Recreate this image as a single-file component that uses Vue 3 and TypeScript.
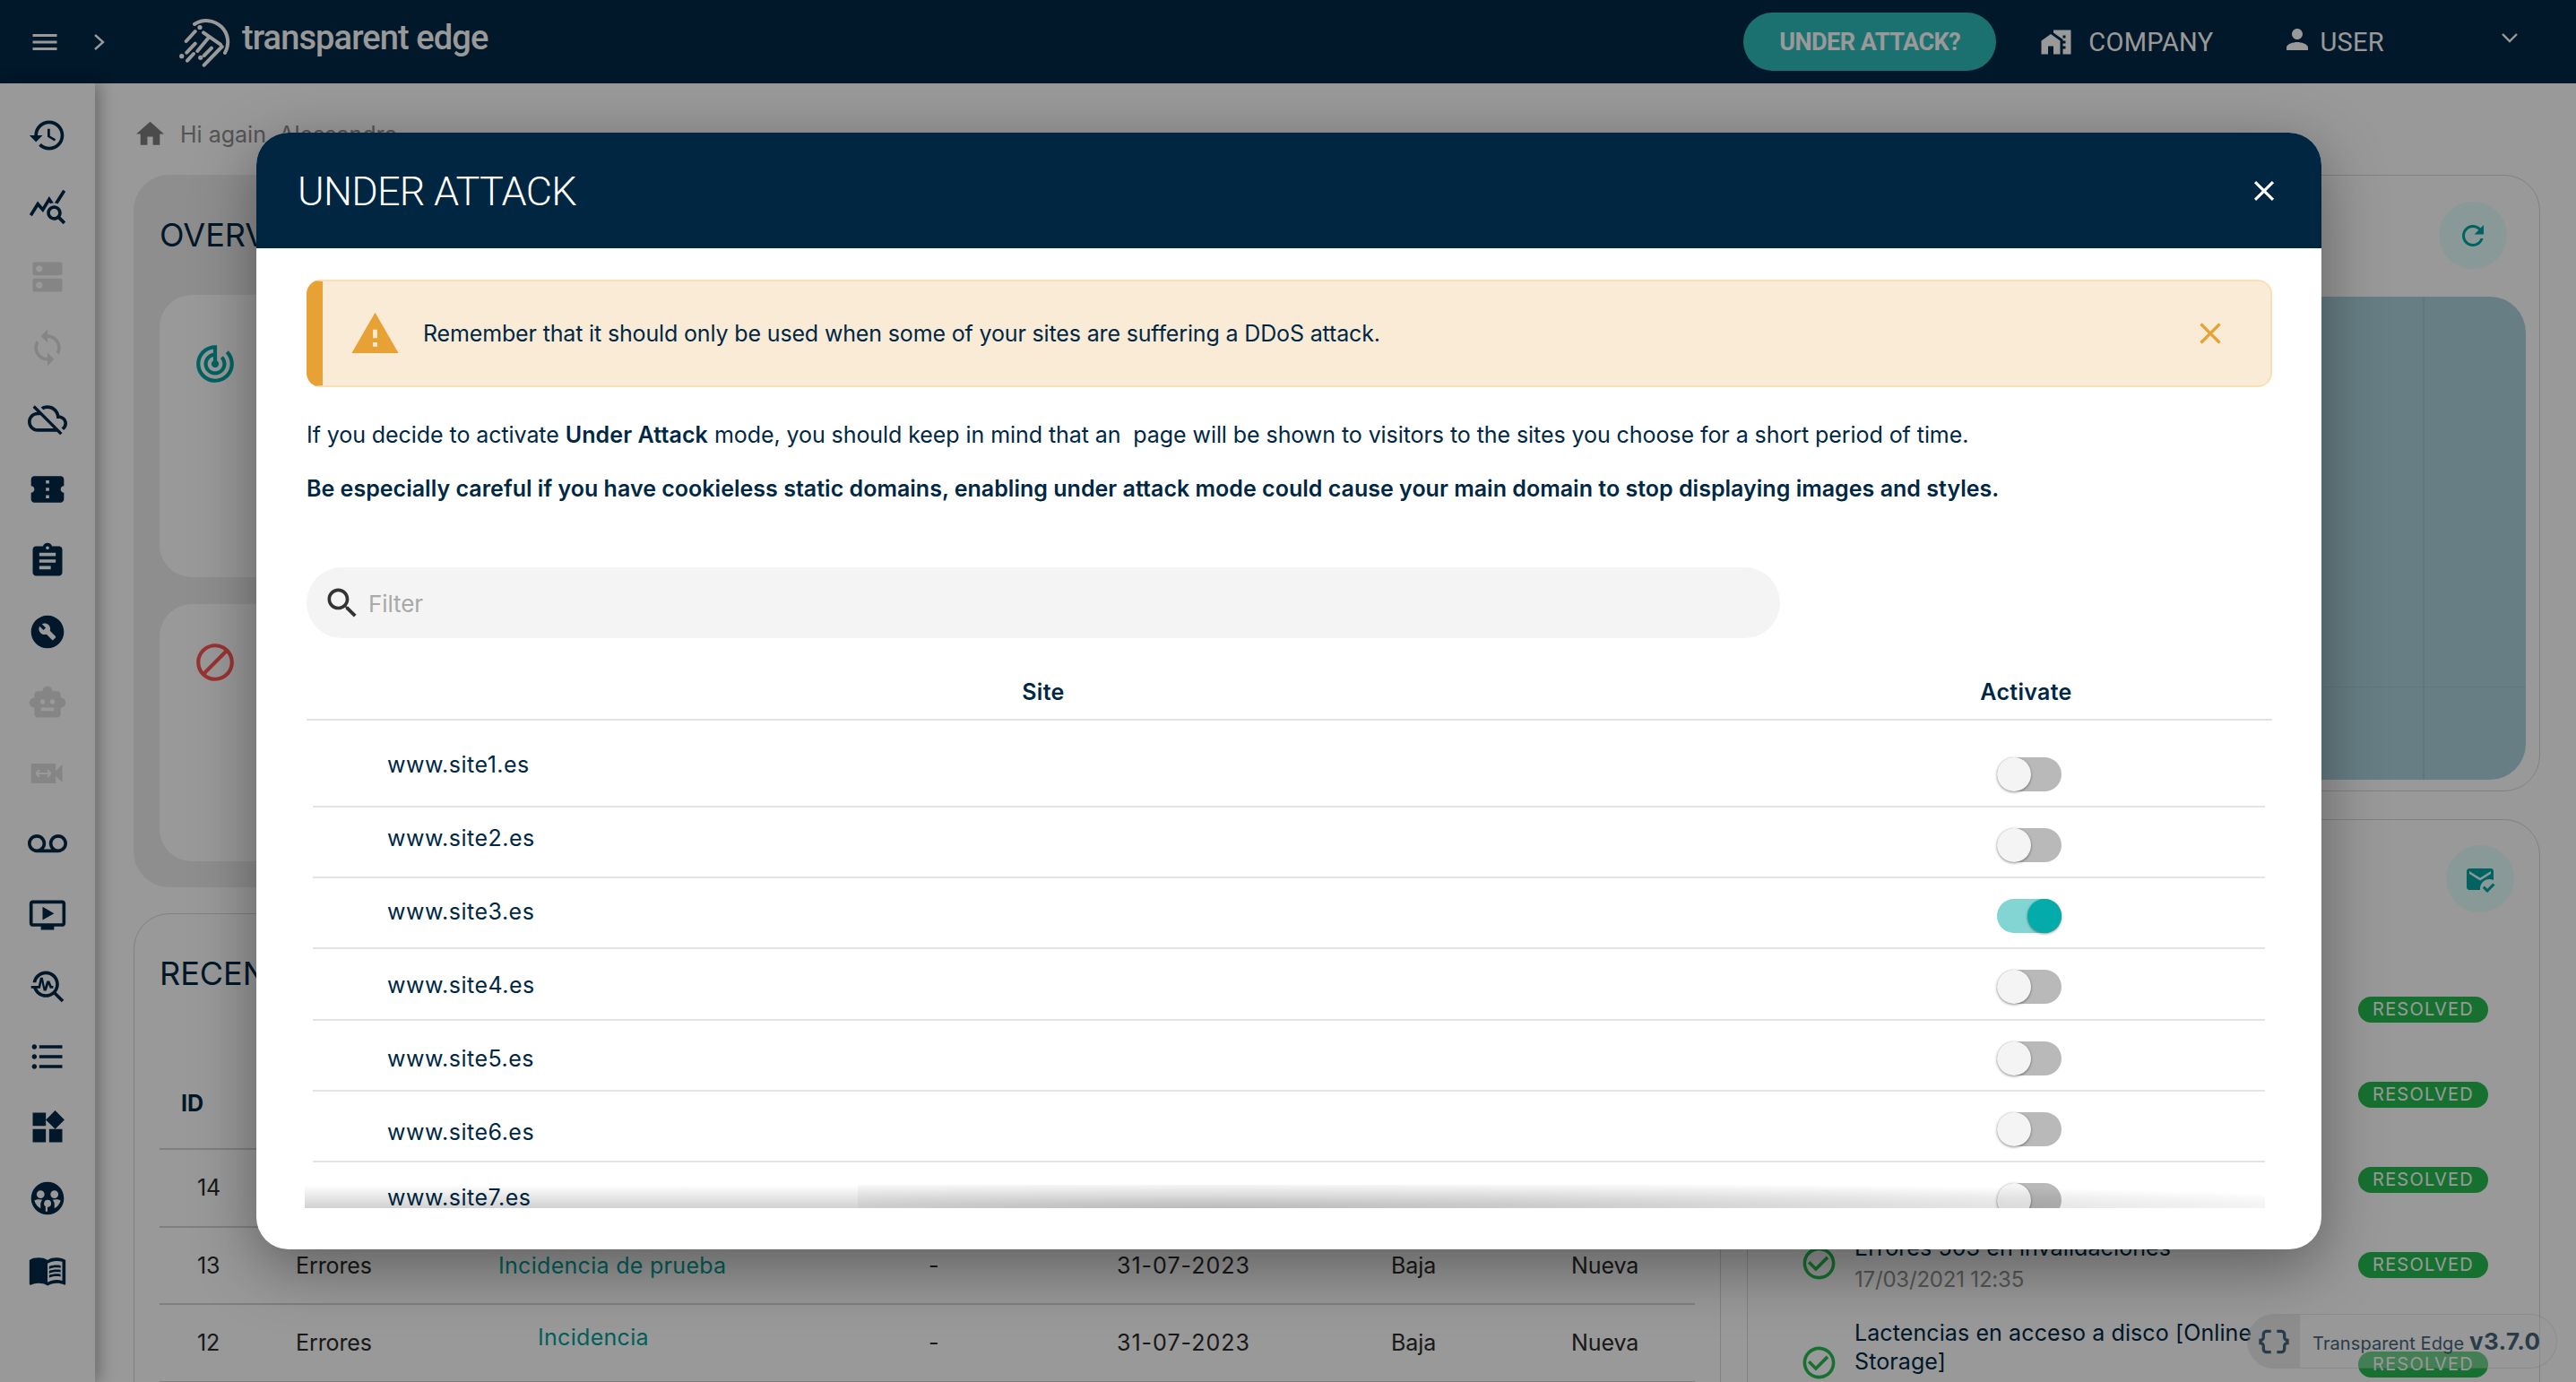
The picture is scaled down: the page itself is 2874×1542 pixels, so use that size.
<template>
  <div class="app">
    <!-- Barra superior -->
    <header class="topbar">
      <svg class="ico burger" viewBox="0 0 24 24"><path :d="icons.menu" /></svg>
      <svg class="chev-right" viewBox="0 0 14 20"><path d="M2 2l9 8-9 8" /></svg>
      <div class="logo">
        <svg class="logo-mark" viewBox="0 0 75 80">
          <path d="M26 20A24 24 0 0 1 60 52M26.7 28L16.7 39M26.7 41.7L17.3 51.7M25 53L18 60.7M56.7 45L36.7 65.7M45 46.7L36.7 55M36 29.3L55 42.7M41.7 35L29.3 50" />
          <circle cx="32" cy="23.5" r="2.6" />
          <circle cx="11.7" cy="55.7" r="2.6" />
          <circle cx="32.7" cy="57.3" r="2.6" />
        </svg>
        <span class="logo-text">transparent edge</span>
      </div>
      <button class="attack-btn">UNDER ATTACK?</button>
      <svg class="ico nav-ico company-ico" viewBox="0 0 24 24"><path :d="icons.homeWork" /></svg>
      <span class="nav-label company">COMPANY</span>
      <svg class="ico nav-ico user-ico" viewBox="0 0 24 24"><path :d="icons.person" /></svg>
      <span class="nav-label user">USER</span>
      <svg class="chev-down" viewBox="0 0 20 12"><path d="M2 2l8 8 8-8" /></svg>
    </header>

    <div class="shell">
      <!-- Menu lateral -->
      <aside class="sidebar">
        <svg
          v-for="item in sideIcons"
          :key="item.name"
          :class="['side-ico', { off: item.off }]"
          viewBox="0 0 24 24"
        >
          <path :d="item.d" fill-rule="evenodd" />
          <path v-if="item.name === 'video'" class="video-arrows" d="M5 12h9M5 12l2-2M5 12l2 2M14 12l-2-2M14 12l-2 2" />
        </svg>
      </aside>

      <main class="main">
        <div class="crumb">
          <svg class="ico home" viewBox="0 0 24 24"><path :d="icons.home" /></svg>
          <span>Hi again, Alessandra</span>
        </div>

        <div class="columns">
          <div class="col">
            <section class="overview">
              <h2 class="section-title">OVERVIEW</h2>
              <div class="stat stat-a">
                <svg class="stat-ico teal" viewBox="0 0 24 24"><path :d="icons.track" /></svg>
              </div>
              <div class="stat stat-b">
                <svg class="stat-ico red" viewBox="0 0 24 24"><path :d="icons.block" /></svg>
              </div>
            </section>

            <section class="recent">
              <h2 class="section-title">RECENT</h2>
              <div class="inc-row inc-head">
                <span class="inc-id">ID</span>
              </div>
              <div v-for="row in incidents" :key="row.id" class="inc-row">
                <span class="inc-id">{{ row.id }}</span>
                <span>{{ row.type }}</span>
                <span :class="['inc-title', { boxed: row.boxed }]">{{ row.title }}</span>
                <span>-</span>
                <span class="inc-date">{{ row.date }}</span>
                <span>{{ row.priority }}</span>
                <span>{{ row.status }}</span>
              </div>
            </section>
          </div>

          <div class="col">
            <section class="side-card chart-card">
              <button class="round-btn refresh-btn">
                <svg viewBox="0 0 24 24"><path :d="icons.refresh" /></svg>
              </button>
              <div class="chart">
                <div></div><div></div><div></div><div></div>
              </div>
            </section>

            <section class="side-card status-card">
              <button class="round-btn mail-btn">
                <svg viewBox="0 0 24 24"><path :d="icons.mailRead" /></svg>
              </button>
              <div v-for="item in statusItems" :key="item.title" class="status-row">
                <svg class="check" viewBox="0 0 24 24"><path :d="icons.check" /></svg>
                <div>
                  <div class="status-title">{{ item.title }}</div>
                  <div class="status-date">{{ item.date }}</div>
                </div>
                <span class="badge">RESOLVED</span>
              </div>
            </section>
          </div>
        </div>
      </main>
    </div>

    <!-- Modal Under Attack -->
    <div class="backdrop">
      <div class="modal">
        <div class="modal-head">
          <h1>UNDER ATTACK</h1>
          <svg class="modal-close" viewBox="0 0 24 24"><path :d="icons.close" /></svg>
        </div>

        <div class="modal-body">
          <div class="alert">
            <svg class="alert-ico" viewBox="0 0 24 24"><path :d="icons.warning" /></svg>
            <span class="alert-text">Remember that it should only be used when some of your sites are suffering a DDoS attack.</span>
            <svg class="alert-close" viewBox="0 0 24 24"><path :d="icons.close" /></svg>
          </div>

          <p class="intro">If you decide to activate <b>Under Attack</b> mode, you should keep in mind that an &nbsp;page will be shown to visitors to the sites you choose for a short period of time.</p>
          <p class="intro strong">Be especially careful if you have cookieless static domains, enabling under attack mode could cause your main domain to stop displaying images and styles.</p>

          <label class="filter">
            <svg viewBox="0 0 24 24"><path :d="icons.search" /></svg>
            <input type="text" placeholder="Filter" />
          </label>

          <div class="site-head">
            <span>Site</span>
            <span>Activate</span>
          </div>

          <div class="site-list">
            <div v-for="site in sites" :key="site.name" class="site-row">
              <span class="site-name" :style="{ paddingTop: site.top + 'px' }">{{ site.name }}</span>
              <span :class="['toggle', { on: site.on }]"><i></i></span>
            </div>
            <div class="list-fade">
              <div class="fade-a"></div>
              <div class="fade-b"></div>
            </div>
          </div>
        </div>
      </div>
    </div>

    <div class="version">
      <span class="version-ico">
        <svg viewBox="0 0 24 24"><path :d="icons.dataObject" /></svg>
      </span>
      <span class="version-text">Transparent Edge <b>v3.7.0</b></span>
    </div>
  </div>
</template>

<script setup lang="ts">
// Pantalla de panel con el modal "Under Attack" abierto.

const icons = {
  menu: 'M3 18h18v-2H3v2zm0-5h18v-2H3v2zm0-7v2h18V6H3z',
  homeWork: 'M1 11v10h5v-6h4v6h5V11L8 6z M10 3v1.97l7 5V11h2v2h-2v2h2v2h-2v4h6V3H10zm9 6h-2V7h2v2z',
  person: 'M12 12c2.21 0 4-1.79 4-4s-1.79-4-4-4-4 1.79-4 4 1.79 4 4 4zm0 2c-2.67 0-8 1.34-8 4v2h16v-2c0-2.66-5.33-4-8-4z',
  home: 'M10 20v-6h4v6h5v-8h3L12 3 2 12h3v8z',
  track: 'M19.07 4.93l-1.41 1.41C19.1 7.79 20 9.79 20 12c0 4.42-3.58 8-8 8s-8-3.58-8-8c0-4.08 3.05-7.44 7-7.93v2.02C8.16 6.57 6 9.03 6 12c0 3.31 2.69 6 6 6s6-2.69 6-6c0-1.66-.67-3.16-1.76-4.24l-1.41 1.41C15.55 9.9 16 10.9 16 12c0 2.21-1.79 4-4 4s-4-1.79-4-4c0-1.86 1.28-3.41 3-3.86v2.14c-.6.35-1 .98-1 1.72 0 1.1.9 2 2 2s2-.9 2-2c0-.74-.4-1.38-1-1.72V2h-1C6.48 2 2 6.48 2 12s4.48 10 10 10 10-4.48 10-10c0-2.76-1.12-5.26-2.93-7.07z',
  block: 'M12 2C6.48 2 2 6.48 2 12s4.48 10 10 10 10-4.48 10-10S17.52 2 12 2zM4 12c0-4.42 3.58-8 8-8 1.85 0 3.55.63 4.9 1.69L5.69 16.9C4.63 15.55 4 13.85 4 12zm8 8c-1.85 0-3.55-.63-4.9-1.69L18.31 7.1C19.37 8.45 20 10.15 20 12c0 4.42-3.58 8-8 8z',
  refresh: 'M17.65 6.35C16.2 4.9 14.21 4 12 4c-4.42 0-7.99 3.58-7.99 8s3.57 8 7.99 8c3.73 0 6.84-2.55 7.73-6h-2.08c-.82 2.33-3.04 4-5.65 4-3.31 0-6-2.69-6-6s2.69-6 6-6c1.66 0 3.14.69 4.22 1.78L13 11h7V4l-2.35 2.35z',
  mailRead: 'M12 19c0-3.87 3.13-7 7-7 1.08 0 2.09.25 3 .68V6c0-1.1-.9-2-2-2H4c-1.1 0-2 .9-2 2v12c0 1.1.9 2 2 2h8.08c-.05-.33-.08-.66-.08-1zM4 6l8 5 8-5v2l-8 5-8-5V6zm13.34 16-3.54-3.54 1.41-1.41 2.12 2.12 4.24-4.24L23 16.34 17.34 22z',
  check: 'M16.59 7.58 10 14.17l-3.59-3.58L5 12l5 5 8-8zM12 2C6.48 2 2 6.48 2 12s4.48 10 10 10 10-4.48 10-10S17.52 2 12 2zm0 18c-4.42 0-8-3.58-8-8s3.58-8 8-8 8 3.58 8 8-3.58 8-8 8z',
  close: 'M19 6.41L17.59 5 12 10.59 6.41 5 5 6.41 10.59 12 5 17.59 6.41 19 12 13.41 17.59 19 19 17.59 13.41 12z',
  warning: 'M1 21h22L12 2 1 21zm12-3h-2v-2h2v2zm0-4h-2v-4h2v4z',
  search: 'M15.5 14h-.79l-.28-.27C15.41 12.59 16 11.11 16 9.5 16 5.91 13.09 3 9.5 3S3 5.91 3 9.5 5.91 16 9.5 16c1.61 0 3.09-.59 4.23-1.57l.27.28v.79l5 4.99L20.49 19l-4.99-5zm-6 0C7.01 14 5 11.99 5 9.5S7.01 5 9.5 5 14 7.01 14 9.5 11.99 14 9.5 14z',
  dataObject: 'M4 7v2c0 .55-.45 1-1 1H2v4h1c.55 0 1 .45 1 1v2c0 1.65 1.35 3 3 3h3v-2H7c-.55 0-1-.45-1-1v-2c0-1.3-.84-2.42-2-2.83v-.34C5.16 11.42 6 10.3 6 9V7c0-.55.45-1 1-1h3V4H7C5.35 4 4 5.35 4 7zm17 3c-.55 0-1-.45-1-1V7c0-1.65-1.35-3-3-3h-3v2h3c.55 0 1 .45 1 1v2c0 1.3.84 2.42 2 2.83v.34c-1.16.41-2 1.52-2 2.83v2c0 .55-.45 1-1 1h-3v2h3c1.65 0 3-1.35 3-3v-2c0-.55.45-1 1-1h1v-4h-1z',
}

const sideIcons = [
  { name: 'history', d: 'M13 3c-4.97 0-9 4.03-9 9H1l3.89 3.89.07.14L9 12H6c0-3.87 3.13-7 7-7s7 3.13 7 7-3.13 7-7 7c-1.93 0-3.68-.79-4.94-2.06l-1.42 1.42C8.27 19.99 10.51 21 13 21c4.97 0 9-4.03 9-9s-4.03-9-9-9zm-1 5v5l4.28 2.54.72-1.21-3.5-2.08V8H12z' },
  { name: 'query', d: 'M19.88 18.47c.44-.7.7-1.51.7-2.39 0-2.49-2.01-4.5-4.5-4.5s-4.5 2.01-4.5 4.5 2.01 4.5 4.49 4.5c.88 0 1.7-.26 2.39-.7L21.58 23 23 21.58l-3.12-3.11zm-3.8.11c-1.38 0-2.5-1.12-2.5-2.5s1.12-2.5 2.5-2.5 2.5 1.12 2.5 2.5-1.12 2.5-2.5 2.5zm-.36-8.5c-.74.02-1.45.18-2.1.45l-.55-.83-3.8 6.18-3.01-3.52-3.63 5.81L1 17l5-8 3 3.5L13 6l2.72 4.08zm2.59.5c-.64-.28-1.33-.45-2.05-.49L21.38 2 23 3.18l-4.69 7.4z' },
  { name: 'dns', off: true, d: 'M20 13H4c-.55 0-1 .45-1 1v6c0 .55.45 1 1 1h16c.55 0 1-.45 1-1v-6c0-.55-.45-1-1-1zM7 19c-1.1 0-2-.9-2-2s.9-2 2-2 2 .9 2 2-.9 2-2 2zM20 3H4c-.55 0-1 .45-1 1v6c0 .55.45 1 1 1h16c.55 0 1-.45 1-1V4c0-.55-.45-1-1-1zM7 9c-1.1 0-2-.9-2-2s.9-2 2-2 2 .9 2 2-.9 2-2 2z' },
  { name: 'sync', off: true, d: 'M12 4V1L8 5l4 4V6c3.31 0 6 2.69 6 6 0 1.01-.25 1.97-.7 2.8l1.46 1.46C19.54 15.03 20 13.57 20 12c0-4.42-3.58-8-8-8zm0 14c-3.31 0-6-2.69-6-6 0-1.01.25-1.97.7-2.8L5.24 7.74C4.46 8.97 4 10.43 4 12c0 4.42 3.58 8 8 8v3l4-4-4-4v3z' },
  { name: 'cloud', d: 'M19.35 10.04C18.67 6.59 15.64 4 12 4c-1.48 0-2.85.43-4.01 1.17l1.46 1.46C10.21 6.23 11.08 6 12 6c3.04 0 5.5 2.46 5.5 5.5v.5H19c1.66 0 3 1.34 3 3 0 1.13-.64 2.11-1.56 2.62l1.45 1.45C23.16 18.16 24 16.68 24 15c0-2.64-2.05-4.78-4.65-4.96zM3 5.27l2.75 2.74C2.56 8.15 0 10.77 0 14c0 3.31 2.69 6 6 6h11.73l2 2L21 20.73 4.27 4 3 5.27zM7.73 10l8 8H6c-2.21 0-4-1.79-4-4s1.79-4 4-4h1.73z' },
  { name: 'ticket', d: 'M22 10V6c0-1.11-.9-2-2-2H4c-1.1 0-1.99.89-1.99 2v4c1.1 0 1.99.9 1.99 2s-.89 2-2 2v4c0 1.1.9 2 2 2h16c1.1 0 2-.9 2-2v-4c-1.1 0-2-.9-2-2s.9-2 2-2zm-9 7.5h-2v-2h2v2zm0-4.5h-2v-2h2v2zm0-4.5h-2v-2h2v2z' },
  { name: 'assignment', d: 'M19 3h-4.18C14.4 1.84 13.3 1 12 1c-1.3 0-2.4.84-2.82 2H5c-1.1 0-2 .9-2 2v14c0 1.1.9 2 2 2h14c1.1 0 2-.9 2-2V5c0-1.1-.9-2-2-2zm-7 0c.55 0 1 .45 1 1s-.45 1-1 1-1-.45-1-1 .45-1 1-1zm2 14H7v-2h7v2zm3-4H7v-2h10v2zm0-4H7V7h10v2z' },
  { name: 'build', d: 'M12 2C6.48 2 2 6.48 2 12c0 5.52 4.48 10 10 10s10-4.48 10-10C22 6.48 17.52 2 12 2zm4.9 13.49-1.4 1.4c-.2.2-.51.2-.71 0l-3.41-3.41c-1.22.43-2.64.17-3.62-.81-1.11-1.11-1.3-2.79-.59-4.1l2.35 2.35 1.41-1.41-2.35-2.34c1.32-.71 2.99-.52 4.1.59.98.98 1.24 2.4.81 3.62l3.41 3.41c.19.19.19.51 0 .7z' },
  { name: 'robot', off: true, d: 'M20 9V7c0-1.1-.9-2-2-2h-3c0-1.66-1.34-3-3-3S9 3.34 9 5H6c-1.1 0-2 .9-2 2v2c-1.66 0-3 1.34-3 3s1.34 3 3 3v4c0 1.1.9 2 2 2h12c1.1 0 2-.9 2-2v-4c1.66 0 3-1.34 3-3s-1.34-3-3-3zM7.5 11.5C7.5 10.67 8.17 10 9 10s1.5.67 1.5 1.5S9.83 13 9 13s-1.5-.67-1.5-1.5zM16 17H8v-2h8v2zm-1-4c-.83 0-1.5-.67-1.5-1.5S14.17 10 15 10s1.5.67 1.5 1.5S15.83 13 15 13z' },
  { name: 'video', off: true, d: 'M17 10.5V7c0-.55-.45-1-1-1H3c-.55 0-1 .45-1 1v10c0 .55.45 1 1 1h13c.55 0 1-.45 1-1v-3.5l4 4v-11l-4 4z' },
  { name: 'voicemail', d: 'M18.5 6C15.46 6 13 8.46 13 11.5c0 1.33.47 2.55 1.26 3.5H9.74c.79-.95 1.26-2.17 1.26-3.5C11 8.46 8.54 6 5.5 6S0 8.46 0 11.5 2.46 17 5.5 17h13c3.04 0 5.5-2.46 5.5-5.5S21.54 6 18.5 6zm-13 9C3.57 15 2 13.43 2 11.5S3.57 8 5.5 8 9 9.57 9 11.5 7.43 15 5.5 15zm13 0c-1.93 0-3.5-1.57-3.5-3.5S16.57 8 18.5 8 22 9.57 22 11.5 20.43 15 18.5 15z' },
  { name: 'tv', d: 'M21 3H3c-1.11 0-2 .89-2 2v12c0 1.1.89 2 2 2h5v2h8v-2h5c1.1 0 1.99-.9 1.99-2L23 5c0-1.11-.9-2-2-2zm0 14H3V5h18v12zM16 11l-7 4V7z' },
  { name: 'trouble', d: 'M22 20.59l-4.69-4.69C18.37 14.55 19 12.85 19 11c0-4.42-3.58-8-8-8-4.08 0-7.44 3.05-7.93 7h2.02C5.57 7.17 8.03 5 11 5c3.31 0 6 2.69 6 6s-2.69 6-6 6c-2.42 0-4.5-1.44-5.45-3.5H3.4C4.45 16.69 7.46 19 11 19c1.85 0 3.55-.63 4.9-1.69L20.59 22 22 20.59zM8.43 9.69L9.65 15h1.64l1.26-3.78.95 2.28h2V12h-1l-1.25-3h-1.63l-1.25 3.78L9.18 7H7.57l-1.12 5H2v1.5h5.57z' },
  { name: 'list', d: 'M4 10.5c-.83 0-1.5.67-1.5 1.5s.67 1.5 1.5 1.5 1.5-.67 1.5-1.5-.67-1.5-1.5-1.5zm0-6c-.83 0-1.5.67-1.5 1.5S3.17 7.5 4 7.5 5.5 6.83 5.5 6 4.83 4.5 4 4.5zm0 12c-.83 0-1.5.68-1.5 1.5s.68 1.5 1.5 1.5 1.5-.68 1.5-1.5-.67-1.5-1.5-1.5zM7 19h14v-2H7v2zm0-6h14v-2H7v2zm0-8v2h14V5H7z' },
  { name: 'widgets', d: 'M13 13v8h8v-8h-8zM3 21h8v-8H3v8zM3 3v8h8V3H3zm13.66-1.31L11 7.34 16.66 13l5.66-5.66-5.66-5.65z' },
  { name: 'people', d: 'M12 2a10 10 0 1 0 0 20 10 10 0 0 0 0-20zM7.8 7.2a2.4 2.4 0 1 1 0 4.8 2.4 2.4 0 0 1 0-4.8zm8.4 0a2.4 2.4 0 1 1 0 4.8 2.4 2.4 0 0 1 0-4.8zM12 13a2.2 2.2 0 1 1 0 4.4V20h-1.2v-3a2.2 2.2 0 0 1 1.2-4zM4 13.4c1.3-.8 3.2-.9 5-.4-1 .9-1.4 2.2-1.2 3.6v1.6A8 8 0 0 1 4 13.4zm16 0a8 8 0 0 1-3.8 4.8v-1.6c.2-1.4-.2-2.7-1.2-3.6 1.8-.5 3.7-.4 5 .4z' },
  { name: 'book', d: 'M21 5c-1.11-.35-2.33-.5-3.5-.5-1.95 0-4.05.4-5.5 1.5-1.45-1.1-3.55-1.5-5.5-1.5S2.45 4.9 1 6v14.65c0 .25.25.5.5.5.1 0 .15-.05.25-.05C3.1 20.45 5.05 20 6.5 20c1.95 0 4.05.4 5.5 1.5 1.35-.85 3.8-1.5 5.5-1.5 1.65 0 3.35.3 4.75 1.05.1.05.15.05.25.05.25 0 .5-.25.5-.5V6c-.6-.45-1.25-.75-2-1zm0 13.5c-1.1-.35-2.3-.5-3.5-.5-1.7 0-4.15.65-5.5 1.5V8c1.35-.85 3.8-1.5 5.5-1.5 1.2 0 2.4.15 3.5.5v11.5zM17.5 10.5c.88 0 1.73.09 2.5.26V9.24c-.79-.15-1.64-.24-2.5-.24-1.7 0-3.24.29-4.5.83v1.66c1.13-.64 2.7-.99 4.5-.99zM13 12.49v1.66c1.13-.64 2.7-.99 4.5-.99.88 0 1.73.09 2.5.26V11.9c-.79-.15-1.64-.24-2.5-.24-1.7 0-3.24.3-4.5.83zM17.5 14.33c-1.7 0-3.24.29-4.5.83v1.66c1.13-.64 2.7-.99 4.5-.99.88 0 1.73.09 2.5.26v-1.52c-.79-.16-1.64-.24-2.5-.24z' },
]

// La fila 14 queda casi entera tapada por el modal
const incidents = [
  { id: 14, type: '', title: '', date: '', priority: '', status: '' },
  { id: 13, type: 'Errores', title: 'Incidencia de prueba', date: '31-07-2023', priority: 'Baja', status: 'Nueva' },
  { id: 12, type: 'Errores', title: 'Incidencia', date: '31-07-2023', priority: 'Baja', status: 'Nueva', boxed: true },
]

const statusItems = [
  { title: 'Errores 503 en caché', date: '22/03/2021 10:20' },
  { title: 'Latencias en origen', date: '19/03/2021 16:05' },
  { title: 'Errores en purgas', date: '18/03/2021 09:40' },
  { title: 'Errores 503 en invalidaciones', date: '17/03/2021 12:35' },
  { title: 'Lactencias en acceso a disco [Online Storage]', date: '16/03/2021 08:15' },
]

// top: ajuste vertical del nombre dentro de la fila
const sites = [
  { name: 'www.site1.es', on: false, top: 15 },
  { name: 'www.site2.es', on: false, top: 18 },
  { name: 'www.site3.es', on: true, top: 21 },
  { name: 'www.site4.es', on: false, top: 24 },
  { name: 'www.site5.es', on: false, top: 26 },
  { name: 'www.site6.es', on: false, top: 29 },
  { name: 'www.site7.es', on: false, top: 23 },
]
</script>

<style scoped>
.app {
  position: relative;
  width: 2874px;
  height: 1542px;
  overflow: hidden;
  background: #fff;
  font-family: Inter, "Liberation Sans", sans-serif;
  font-size: 25px;
  color: #002845;
  letter-spacing: -0.1px;
}

.ico {
  fill: currentColor;
  flex: none;
}

/* Barra superior */
.topbar {
  height: 93px;
  display: flex;
  align-items: center;
  padding-left: 32px;
  background: #002845;
  color: #fff;
  font-family: Roboto, "Liberation Sans", sans-serif;
  letter-spacing: 0;
}

.burger {
  width: 36px;
  height: 36px;
}

.chev-right {
  width: 14px;
  height: 20px;
  margin-left: 36px;
  fill: none;
  stroke: #fff;
  stroke-width: 2.4;
}

.logo {
  display: flex;
  align-items: center;
  margin-left: 73px;
  height: 80px;
}

.logo-mark {
  width: 75px;
  height: 80px;
  fill: #fff;
  stroke: #fff;
}

.logo-mark path {
  fill: none;
  stroke-width: 4;
  stroke-linecap: round;
}

.logo-mark circle {
  stroke: none;
}

.logo-text {
  margin-left: 4px;
  font-size: 38px;
  font-weight: 500;
  letter-spacing: -0.9px;
  line-height: 1;
  margin-top: -10px;
}

.attack-btn {
  margin-left: auto;
  width: 282px;
  height: 65px;
  border: 0;
  border-radius: 33px;
  background: #2dbcbb;
  color: #fff;
  font-family: inherit;
  font-size: 27px;
  font-weight: 700;
  letter-spacing: -0.5px;
  padding: 0;
}

.nav-ico {
  width: 36px;
  height: 36px;
}

.company-ico {
  margin-left: 49px;
}

.nav-label {
  font-size: 29px;
  letter-spacing: 0.3px;
}

.company {
  margin-left: 18px;
}

.user-ico {
  margin-left: 76px;
  margin-top: -6px;
}

.user {
  margin-left: 7px;
}

.chev-down {
  width: 20px;
  height: 12px;
  margin-left: 130px;
  margin-right: 64px;
  margin-top: -9px;
  fill: none;
  stroke: #fff;
  stroke-width: 2.4;
}

/* Estructura */
.shell {
  display: grid;
  grid-template-columns: 106px 1fr;
  height: 1449px;
}

.sidebar {
  display: flex;
  flex-direction: column;
  align-items: center;
  gap: 35.1px;
  padding-top: 36px;
  background: #fff;
  box-shadow: 6px 0 16px rgba(0, 0, 0, 0.28);
  position: relative;
}

.side-ico {
  width: 44px;
  height: 44px;
  flex: none;
  fill: #002845;
}

.side-ico.off {
  fill: #dedede;
}

.video-arrows {
  fill: none;
  stroke: #fff;
  stroke-width: 1.1;
}

.main {
  padding: 35px 40px 0 43px;
  overflow: hidden;
}

.crumb {
  display: flex;
  align-items: center;
  height: 37px;
  gap: 15px;
  color: #8c8c8c;
  font-size: 25px;
  letter-spacing: 0;
  padding-top: 3px;
  margin-bottom: -3px;
}

.home {
  width: 37px;
  height: 37px;
  color: #7d7d7d;
  margin-top: -1px;
}

.columns {
  display: grid;
  grid-template-columns: 1771px 885px;
  column-gap: 29px;
  margin-top: 30px;
}

.col {
  display: flex;
  flex-direction: column;
  gap: 29px;
}

.section-title {
  margin: 0;
  font-size: 36px;
  font-weight: 400;
  line-height: 50px;
  letter-spacing: 0;
}

/* Overview */
.overview {
  height: 795px;
  box-sizing: border-box;
  padding: 42px 29px 29px;
  border-radius: 40px;
  background: #ededed;
  display: flex;
  flex-direction: column;
}

.stat {
  border-radius: 36px;
  background: #fff;
  width: 900px;
  padding: 52px 0 0 37px;
  box-sizing: border-box;
}

.stat-a {
  height: 315px;
  margin-top: 42px;
}

.stat-b {
  height: 287px;
  margin-top: 30px;
  padding-top: 40px;
}

.stat-ico {
  width: 50px;
  height: 50px;
  display: block;
}

.teal {
  fill: #00a5a3;
}

.red {
  fill: #ff5555;
}

/* Incidencias */
.recent {
  border: 1px solid #d8d8d8;
  border-radius: 40px;
  padding: 41px 28px 0;
  height: 700px;
  box-sizing: border-box;
}

.inc-row {
  display: grid;
  grid-template-columns: 152px 206px 500px 210px 306px 201px 138px;
  align-items: center;
  height: 86.5px;
  border-bottom: 2px solid #d4d4d4;
  box-sizing: border-box;
  color: #2a2a2a;
}

.inc-id {
  padding-left: 42px;
}

.inc-head {
  height: 102px;
  margin-top: 70px;
  font-weight: 700;
  color: #002845;
}

.inc-head .inc-id {
  padding-left: 24px;
}

.inc-title {
  padding-left: 20px;
  color: #00a098;
  letter-spacing: 0.3px;
}

.inc-date {
  letter-spacing: 1px;
}

.inc-title.boxed {
  padding-left: 64px;
  margin-top: -12px;
  background: rgba(255, 255, 255, 0.5);
  width: 296px;
  box-sizing: border-box;
}

/* Columna derecha */
.side-card {
  border: 1px solid #d8d8d8;
  border-radius: 40px;
  box-sizing: border-box;
  position: relative;
}

.chart-card {
  height: 688px;
  padding: 29px 15px 15px;
}

.round-btn {
  display: block;
  width: 76px;
  height: 75px;
  padding: 0;
  border: 0;
  border-radius: 50%;
  background: #e3fffd;
  margin-left: auto;
}

.round-btn svg {
  display: block;
  width: 36px;
  height: 36px;
  margin: auto;
  fill: #00a5a3;
}

.refresh-btn {
  margin-right: 21px;
}

.chart {
  display: grid;
  grid-template-columns: 740px 115px;
  grid-template-rows: 436px 103px;
  margin-top: 31px;
  border-radius: 40px;
  overflow: hidden;
  background: #aad2dc;
}

.chart div:nth-child(odd) {
  border-right: 2px solid rgba(0, 0, 0, 0.05);
}

.chart div:nth-child(-n + 2) {
  border-bottom: 1px solid rgba(0, 0, 0, 0.05);
}

.status-card {
  height: 700px;
  margin-top: 2px;
  padding: 28px 0 0 58px;
}

.mail-btn {
  margin-right: 28px;
  margin-bottom: 61px;
}

.status-row {
  display: grid;
  grid-template-columns: 43px 470px 145px;
  column-gap: 18px;
  align-items: center;
  padding: 12px 0;
  min-height: 95px;
  box-sizing: border-box;
}

.check {
  width: 43px;
  height: 43px;
  margin-top: -4px;
  fill: #26bc50;
}

.status-title {
  line-height: 32px;
  color: #002845;
  letter-spacing: 0.1px;
}

.status-date {
  line-height: 39px;
  color: #909090;
  font-size: 24px;
  letter-spacing: -0.2px;
}

.badge {
  margin-left: 74px;
  width: 145px;
  height: 29px;
  border-radius: 15px;
  background: #26bc50;
  color: #fff;
  font-size: 20px;
  line-height: 29px;
  text-align: center;
  letter-spacing: 1.2px;
}

/* Modal */
.backdrop {
  position: absolute;
  inset: 0;
  background: rgba(0, 0, 0, 0.4);
  padding: 148px 0 0 286px;
  box-sizing: border-box;
}

.modal {
  width: 2304px;
  height: 1246px;
  border-radius: 36px;
  overflow: hidden;
  background: #fff;
  box-shadow: 0 20px 70px rgba(0, 0, 0, 0.38);
}

.modal-head {
  height: 129px;
  display: flex;
  align-items: center;
  justify-content: space-between;
  padding: 0 46px;
  background: #002642;
  color: #fff;
}

.modal-head h1 {
  margin: 2px 0 0;
  font-family: Roboto, "Liberation Sans", sans-serif;
  font-size: 45px;
  font-weight: 300;
  letter-spacing: -0.7px;
}

.modal-close {
  width: 38px;
  height: 38px;
  fill: #fff;
  margin-right: -1px;
  margin-top: 0;
}

.modal-body {
  padding: 35px 55px 0 56px;
}

.alert {
  display: flex;
  align-items: center;
  height: 120px;
  box-sizing: border-box;
  border: 2px solid #f8dfb5;
  border-left: 18px solid #e8a135;
  border-radius: 16px;
  background: #faebd7;
  padding-left: 30px;
}

.alert-ico {
  width: 57px;
  height: 57px;
  fill: #e8a135;
  flex: none;
}

.alert-text {
  margin-left: 25px;
  flex: 1;
  letter-spacing: -0.15px;
}

.alert-close {
  width: 40px;
  height: 40px;
  fill: #e8a135;
  margin-right: 47px;
  flex: none;
}

.intro {
  margin: 0;
  line-height: 36px;
  padding-top: 35px;
  letter-spacing: -0.07px;
}

.intro.strong {
  padding-top: 24px;
  font-weight: 600;
  letter-spacing: 0.02px;
}

.intro b {
  font-weight: 600;
  letter-spacing: 0.1px;
}

.filter {
  display: flex;
  align-items: center;
  width: 1644px;
  height: 79px;
  margin-top: 70px;
  border-radius: 40px;
  background: #f4f4f4;
  padding-left: 18px;
  box-sizing: border-box;
}

.filter svg {
  width: 44px;
  height: 44px;
  fill: #333;
  flex: none;
}

.filter input {
  flex: 1;
  border: 0;
  outline: 0;
  background: transparent;
  font: inherit;
  font-size: 26px;
  padding: 2px 0 0 7px;
  letter-spacing: inherit;
}

.filter input::placeholder {
  color: #a8a8a8;
}

.site-head {
  display: grid;
  grid-template-columns: 1644px 1fr;
  height: 92px;
  box-sizing: border-box;
  padding-top: 44px;
  border-bottom: 2px solid #e2e2e2;
  text-align: center;
  font-weight: 600;
  line-height: 32px;
  letter-spacing: 0.3px;
}

.site-list {
  position: relative;
  height: 544px;
  overflow: hidden;
  margin-left: -2px;
  padding-left: 9px;
  width: 2187px;
  box-sizing: border-box;
}

.site-row {
  display: grid;
  grid-template-columns: 1637px 1fr;
  height: 79.2px;
  box-sizing: border-box;
  border-bottom: 2px solid #e4e4e4;
  align-items: start;
}

.site-row:first-child {
  height: 97px;
  padding-top: 18px;
}

.site-name {
  padding-left: 83px;
  line-height: 32px;
  letter-spacing: 0.5px;
}

.toggle {
  position: relative;
  display: block;
  width: 72px;
  height: 38px;
  margin: 23px 0 0 242px;
  border-radius: 19px;
  background: #b9b9b9;
}

.toggle i {
  position: absolute;
  left: 0;
  top: 0;
  width: 38px;
  height: 38px;
  border-radius: 50%;
  background: #f4f4f4;
  box-shadow: 0 1px 3px rgba(0, 0, 0, 0.45);
}

.toggle.on {
  background: #82d5d3;
}

.toggle.on i {
  left: 34px;
  background: #04abab;
}

.list-fade {
  position: absolute;
  left: 0;
  right: 0;
  bottom: 0;
  height: 26px;
  display: flex;
  pointer-events: none;
}

.fade-a {
  width: 617px;
  background: linear-gradient(rgba(0, 0, 0, 0), rgba(0, 0, 0, 0.18));
}

.fade-b {
  flex: 1;
  background: radial-gradient(ellipse 1400px 30px at 400px 100%, rgba(0, 0, 0, 0.27), rgba(0, 0, 0, 0));
}

/* Versión */
.version {
  position: absolute;
  left: 2507px;
  top: 1466px;
  width: 346px;
  height: 61px;
  display: flex;
  align-items: center;
  border-radius: 31px;
  border: 1px solid rgba(0, 0, 0, 0.08);
  box-sizing: border-box;
  overflow: hidden;
  background: rgba(153, 153, 153, 0.35);
  color: #2a3c49;
}

.version-ico {
  width: 58px;
  height: 100%;
  display: flex;
  align-items: center;
  justify-content: center;
  background: rgba(0, 0, 0, 0.07);
  flex: none;
}

.version-ico svg {
  width: 40px;
  height: 40px;
  fill: #2a3c49;
}

.version-text {
  margin-left: 14px;
  font-size: 20px;
  letter-spacing: 0.1px;
  white-space: nowrap;
}

.version-text b {
  font-size: 26px;
  font-weight: 700;
  letter-spacing: 0.4px;
}
</style>

<style>
body {
  margin: 0;
}
</style>
